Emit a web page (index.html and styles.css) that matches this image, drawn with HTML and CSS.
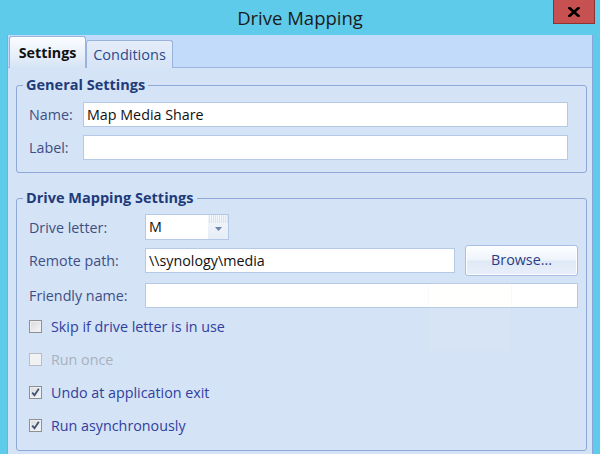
FILE: index.html
```html
<!DOCTYPE html>
<html>
<head>
<meta charset="utf-8">
<link rel="stylesheet" href="styles.css">
</head>
<body>
<div class="window">
  <header class="titlebar">
    <span></span>
    <h1 class="title">Drive Mapping</h1>
    <button class="close" aria-label="Close">
      <svg width="12" height="10" viewBox="0 0 12 10"><path d="M1.5 1 L10.5 9 M10.5 1 L1.5 9" stroke="#000" stroke-width="2.6" stroke-linecap="square"/></svg>
    </button>
  </header>
  <div class="client">
    <nav class="tabs">
      <div class="tab active">Settings</div>
      <div class="tab">Conditions</div>
    </nav>
    <main class="panel">
      <fieldset class="group general">
        <legend>General Settings</legend>
        <div class="form general-form">
          <label>Name:</label>
          <div class="input">Map Media Share</div>
          <label>Label:</label>
          <div class="input"></div>
        </div>
      </fieldset>
      <fieldset class="group drive">
        <legend>Drive Mapping Settings</legend>
        <div class="form drive-form">
          <label>Drive letter:</label>
          <div class="row1">
            <div class="combo">
              <span class="combo-value">M</span>
              <span class="combo-btn"><svg width="7" height="4" viewBox="0 0 7 4"><path d="M0 0 H7 L3.5 4 Z" fill="#6c84ad"/></svg></span>
            </div>
          </div>
          <label>Remote path:</label>
          <div class="row2">
            <div class="input path">\\synology\media</div>
            <button class="btn">Browse...</button>
          </div>
          <label>Friendly name:</label>
          <div class="input"></div>
        </div>
        <ul class="checks">
          <li><span class="cb"></span>Skip if drive letter is in use</li>
          <li class="disabled"><span class="cb"></span>Run once</li>
          <li><span class="cb checked"><svg width="9" height="9" viewBox="0 0 9 9"><path d="M1.2 4.6 L3.5 7.2 L7.8 0.8" fill="none" stroke="#3f5377" stroke-width="1.8"/></svg></span>Undo at application exit</li>
          <li><span class="cb checked"><svg width="9" height="9" viewBox="0 0 9 9"><path d="M1.2 4.6 L3.5 7.2 L7.8 0.8" fill="none" stroke="#3f5377" stroke-width="1.8"/></svg></span>Run asynchronously</li>
        </ul>
      </fieldset>
    </main>
  </div>
  <div class="ghost"></div>
</div>
</body>
</html>
```
FILE: styles.css
```css
* { box-sizing: border-box; }
html, body { margin: 0; padding: 0; }
body {
  width: 600px;
  height: 454px;
  overflow: hidden;
  background: #5fcbea;
  font-family: "Open Sans", "Noto Sans", sans-serif;
  font-size: 14px;
}
.window { position: relative; height: 454px; }
.titlebar {
  height: 35px;
  display: grid;
  grid-template-columns: 1fr auto 1fr;
  align-items: center;
}
.title {
  margin: 0;
  font-weight: normal;
  font-size: 18.5px;
  color: #1b1b1b;
  line-height: 20px;
  padding-top: 1px;
}
.close {
  justify-self: end;
  align-self: start;
  margin-right: 5px;
  width: 42px;
  height: 24px;
  padding: 0;
  background: #c75050;
  border: 1px solid #8c3434;
  border-top: none;
  display: flex;
  align-items: center;
  justify-content: center;
}
.client {
  margin-left: 7px;
  width: 586px;
  height: 419px;
  border-left: 1px solid #8aa6d8;
  border-right: 1px solid #8aa6d8;
  display: flex;
  flex-direction: column;
}
.tabs {
  height: 33px;
  background: #c3dbfb;
  border-bottom: 1px solid #9db6e0;
  display: flex;
  align-items: flex-end;
  padding-left: 1px;
}
.tab {
  height: 28px;
  margin-bottom: -1px;
  padding: 0 4px;
  width: 87px;
  border: 1px solid #9ab3dd;
  border-bottom: none;
  border-radius: 3px 3px 0 0;
  background: linear-gradient(#e4edf9, #d6e4f6);
  color: #2d4a8c;
  font-size: 14.5px;
  line-height: 27px;
  text-align: center;
}
.tab.active {
  width: 77px;
  height: 32px;
  font-weight: bold;
  font-size: 14.3px;
  color: #111;
  background: linear-gradient(#fbfdff, #e7eff9 60%, #d4e3f6);
  line-height: 32px;
  position: relative;
  z-index: 1;
}
.panel {
  flex: 1;
  background: #d4e3f6;
  padding: 7px 5px 0 8px;
}
.group {
  margin: 0;
  border: 1px solid #8ea9d9;
  border-radius: 3px;
  min-width: 0;
}
.group legend {
  color: #1e3b7a;
  font-weight: bold;
  font-size: 14.5px;
  line-height: 20px;
  padding: 0 3px;
  margin-left: -6px;
}
.general { padding: 7px 18px 12px 12px; }
.drive { margin-top: 15px; padding: 6px 8px 8px 12px; }
.form {
  display: grid;
  align-items: center;
  row-gap: 8px;
}
.general-form { grid-template-columns: 54px 1fr; }
.drive-form { grid-template-columns: 116px 1fr; row-gap: 0; }
.form label { color: #3e4f84; font-size: 14.3px; }
.input {
  height: 25px;
  background: #fff;
  border: 1px solid #b5c9e7;
  padding: 0 3px;
  line-height: 23px;
  color: #111;
  font-size: 14.3px;
}
.drive-form > label:nth-of-type(1) { height: 25px; line-height: 25px; }
.drive-form > label:nth-of-type(2) { margin-top: 5px; }
.drive-form > label:nth-of-type(3) { margin-top: 7px; }
.drive-form > .input { margin-top: 7px; height: 25px; }
.row2 { display: flex; align-items: center; gap: 10px; margin-top: 5px; }
.row2 .path { flex: 1; }
.combo {
  width: 84px;
  height: 26px;
  background: #fff;
  border: 1px solid #b5c9e7;
  display: flex;
}
.combo-value { flex: 1; padding-left: 3px; line-height: 24px; font-size: 14.3px; color: #111; }
.combo-btn {
  width: 20px;
  display: flex;
  align-items: center;
  justify-content: center;
  padding-top: 4px;
  background:
    repeating-linear-gradient(90deg, transparent 0 1px, rgba(200,214,236,.6) 1px 2px) top / 100% 8px no-repeat,
    linear-gradient(#f4f7fb, #e6edf7);
}
.btn {
  width: 113px;
  height: 31px;
  border: 1px solid #a9bfe1;
  border-radius: 3px;
  background: linear-gradient(#fdfeff, #eef4fb 48%, #dfe9f6 52%, #e9f0fa);
  color: #2a3d88;
  font-family: inherit;
  font-size: 14.3px;
  padding: 0 0 2px;
  box-shadow: inset 0 0 0 1px #fff;
}
.checks { list-style: none; margin: 2px 0 0; padding: 0; }
.checks li {
  height: 33px;
  display: flex;
  align-items: center;
  gap: 9px;
  color: #3140a0;
  font-size: 14.3px;
}
.checks li.disabled { color: #a8b1c0; }
.cb {
  width: 13px;
  height: 13px;
  border: 1px solid #8d8f93;
  background: linear-gradient(135deg, #d8d9dc, #f6f6f7);
  box-shadow: inset 0 0 0 1px #eef0f3;
  display: flex;
  align-items: center;
  justify-content: center;
}
.disabled .cb { border-color: #b9bcc1; background: #f1f2f4; box-shadow: none; }
.ghost {
  position: absolute;
  left: 428px;
  top: 282px;
  width: 84px;
  height: 70px;
  background: rgba(250, 250, 235, 0.05);
  border: 1px solid rgba(200, 210, 225, 0.12);
}
```
